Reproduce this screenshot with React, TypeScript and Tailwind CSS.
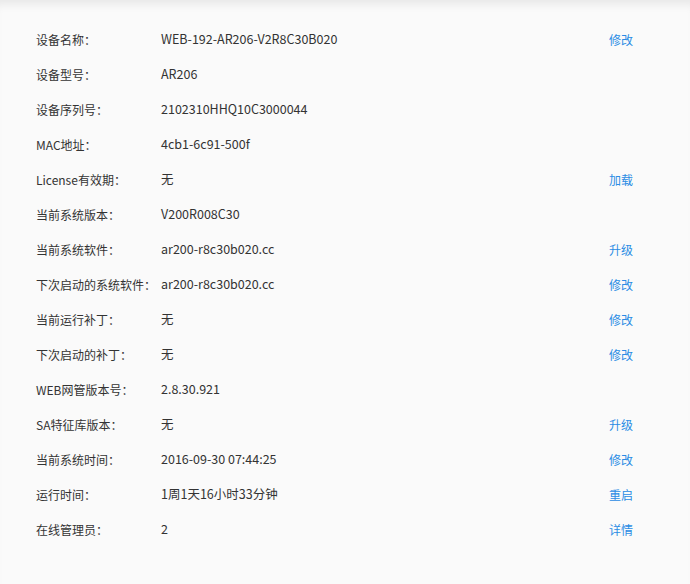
import React from "react";

interface InfoRow {
  label: string;
  value: string;
  action?: string;
}

const rows: InfoRow[] = [
  { label: "设备名称：", value: "WEB-192-AR206-V2R8C30B020", action: "修改" },
  { label: "设备型号：", value: "AR206" },
  { label: "设备序列号：", value: "2102310HHQ10C3000044" },
  { label: "MAC地址：", value: "4cb1-6c91-500f" },
  { label: "License有效期：", value: "无", action: "加载" },
  { label: "当前系统版本：", value: "V200R008C30" },
  { label: "当前系统软件：", value: "ar200-r8c30b020.cc", action: "升级" },
  { label: "下次启动的系统软件：", value: "ar200-r8c30b020.cc", action: "修改" },
  { label: "当前运行补丁：", value: "无", action: "修改" },
  { label: "下次启动的补丁：", value: "无", action: "修改" },
  { label: "WEB网管版本号：", value: "2.8.30.921" },
  { label: "SA特征库版本：", value: "无", action: "升级" },
  { label: "当前系统时间：", value: "2016-09-30 07:44:25", action: "修改" },
  { label: "运行时间：", value: "1周1天16小时33分钟", action: "重启" },
  { label: "在线管理员：", value: "2", action: "详情" },
];

export default function App() {
  return (
    <div
      className="w-[690px] h-[584px] bg-[#fafafa] shadow-[inset_0_10px_10px_-6px_rgba(0,0,0,0.08)] pt-[22px] pl-[36px] text-[12px] text-[#333]"
      style={{ fontFamily: "'Noto Sans CJK SC', 'Noto Sans', sans-serif" }}
    >
      {rows.map((row) => (
        <div
          key={row.label}
          className="grid grid-cols-[125px_448px_auto] h-[35px] items-center whitespace-nowrap"
        >
          <span>{row.label}</span>
          <span className="text-[12.5px]">{row.value}</span>
          {row.action ? (
            <a className="text-[#2a8ce4] cursor-pointer hover:underline">{row.action}</a>
          ) : (
            <span />
          )}
        </div>
      ))}
    </div>
  );
}
